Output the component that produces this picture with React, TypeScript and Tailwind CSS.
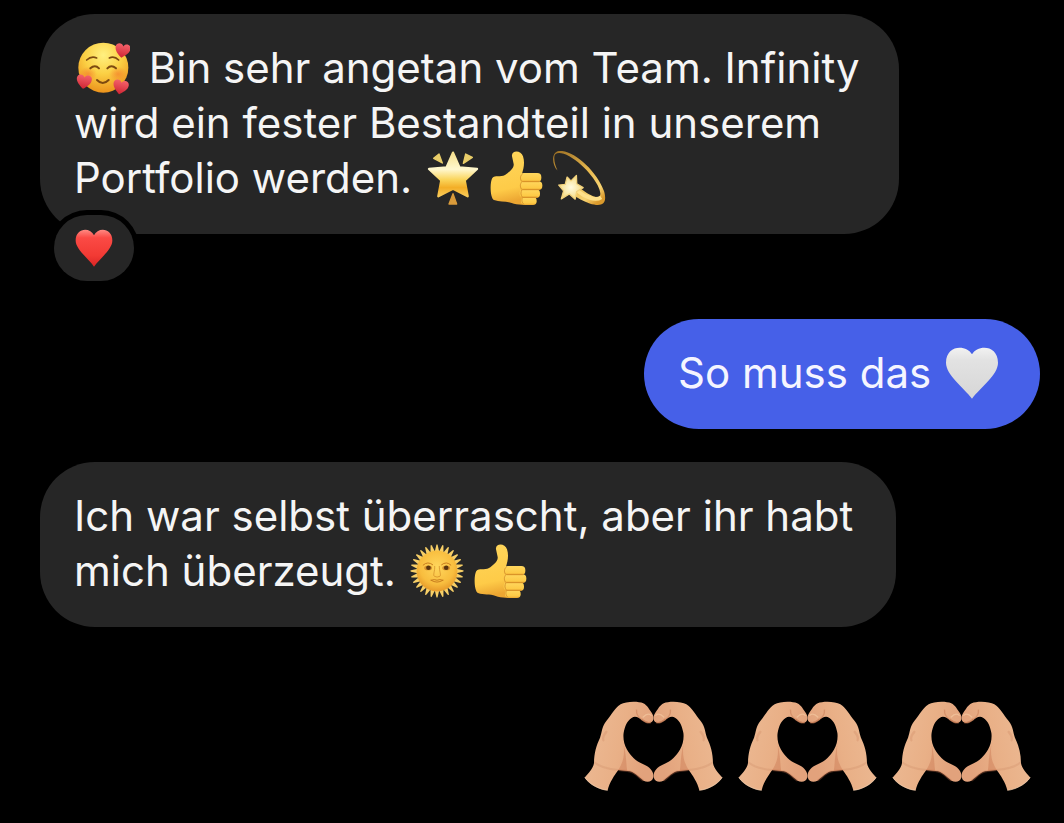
import React, { useId } from "react";
import { cva } from "class-variance-authority";
import { clsx } from "clsx";

type EmojiProps = {
  label: string;
  viewBox: string;
  className?: string;
  children: React.ReactNode;
};

function Emoji({ label, viewBox, className, children }: EmojiProps) {
  return (
    <svg
      role="img"
      aria-label={label}
      viewBox={viewBox}
      className={clsx(className ?? "inline-block w-[54px] h-[54px] ml-[2px] mr-[7px] align-[-12px]")}
    >
      {children}
    </svg>
  );
}

function LoveFace() {
  const id = useId();
  const heart = "M0 21C-9 14-21 5-21-7C-21-19-5-22 0-11C5-22 21-19 21-7C21 5 9 14 0 21Z";
  return (
    <Emoji label="Lächelndes Gesicht mit Herzen" viewBox="48 33 162 162">
      <defs>
        <radialGradient id={id + "f"} cx="0.5" cy="0.25" r="0.75">
          <stop offset="0" stopColor="#fff080" />
          <stop offset="0.5" stopColor="#fbd044" />
          <stop offset="1" stopColor="#ec931c" />
        </radialGradient>
        <radialGradient id={id + "c"}>
          <stop offset="0" stopColor="#f5762b" stopOpacity="0.6" />
          <stop offset="1" stopColor="#f5762b" stopOpacity="0" />
        </radialGradient>
        <linearGradient id={id + "h"} x1="0" y1="0" x2="0" y2="1">
          <stop offset="0" stopColor="#f4626a" />
          <stop offset="1" stopColor="#cf2433" />
        </linearGradient>
      </defs>
      <circle cx="130" cy="113" r="75" fill={`url(#${id}f)`} />
      <ellipse cx="84" cy="132" rx="27" ry="22" fill={`url(#${id}c)`} />
      <ellipse cx="174" cy="132" rx="27" ry="22" fill={`url(#${id}c)`} />
      <g fill="none" stroke="#7d4a10" strokeLinecap="round">
        <path d="M80 90Q94 77 110 84" strokeWidth="5" />
        <path d="M148 84Q163 77 176 90" strokeWidth="5" />
        <path d="M91 115Q105 102 117 115" strokeWidth="6" />
        <path d="M142 115Q154 102 168 115" strokeWidth="6" />
        <path d="M111 150Q128 168 146 150" strokeWidth="6" />
      </g>
      <g fill={`url(#${id}h)`}>
        <path d={heart} transform="translate(188 61) rotate(10) scale(1.08)" />
        <path d={heart} transform="translate(72 154) rotate(8) scale(1.08)" />
        <path d={heart} transform="translate(182 170) rotate(12) scale(1.1)" />
      </g>
    </Emoji>
  );
}

function GlowingStar() {
  const id = useId();
  return (
    <Emoji label="Funkelnder Stern" viewBox="33 31 162 162">
      <defs>
        <linearGradient id={id} x1="0" y1="0" x2="0" y2="1">
          <stop offset="0" stopColor="#f6e08c" />
          <stop offset="0.38" stopColor="#fff8cf" />
          <stop offset="0.62" stopColor="#fad45a" />
          <stop offset="0.8" stopColor="#f3ae27" />
          <stop offset="1" stopColor="#f9cb59" />
        </linearGradient>
      </defs>
      <path
        d="M114 36L133 80L186 85L149 119L158 167L114 144L70 167L79 119L42 85L95 80Z"
        fill={`url(#${id})`}
        stroke={`url(#${id})`}
        strokeWidth="7"
        strokeLinejoin="round"
      />
      <g strokeWidth="4" strokeLinejoin="round">
        <path d="M72 40L82 67L56 53Z" fill="#e9cd69" stroke="#e9cd69" />
        <path d="M152 40L172 50L145 68Z" fill="#e9cd69" stroke="#e9cd69" />
        <path d="M114 159L125 190L102 190Z" fill="#d99b3b" stroke="#d99b3b" />
      </g>
    </Emoji>
  );
}

function ThumbsUp() {
  const id = useId();
  return (
    <Emoji label="Daumen hoch" viewBox="222 31 162 162">
      <defs>
        <linearGradient id={id} x1="0" y1="0" x2="0.15" y2="1">
          <stop offset="0" stopColor="#ffd75c" />
          <stop offset="0.75" stopColor="#fecb48" />
          <stop offset="1" stopColor="#eca632" />
        </linearGradient>
        <linearGradient id={id + "n"} x1="0" y1="0" x2="0" y2="1">
          <stop offset="0" stopColor="#ffd75e" />
          <stop offset="0.75" stopColor="#fdca46" />
          <stop offset="1" stopColor="#e9a530" />
        </linearGradient>
      </defs>
      <path
        d="M291 47C288 29 318 27 324 47C330 65 326 84 321 99L338 100L340 190C322 194 304 192 290 187C272 180 254 185 237 178C225 172 224 125 232 112C240 103 257 110 270 103C281 96 298 82 296 70Z"
        fill={`url(#${id})`}
      />
      <g fill={`url(#${id}n)`}>
        <rect x="318" y="169" width="47" height="24" rx="11" />
        <rect x="314" y="146" width="61" height="26" rx="12" />
        <rect x="315" y="122" width="67" height="26" rx="12" />
        <rect x="315" y="97" width="64" height="27" rx="12" />
      </g>
      <path
        d="M323 99C314 106 315 117 321 123C314 130 315 141 321 147C316 155 317 165 323 170C319 178 320 186 328 192"
        fill="none"
        stroke="#d9972f"
        strokeWidth="3"
      />
      <path d="M322 123H373M322 147H374M323 170H366" stroke="#d79027" strokeWidth="3" />
    </Emoji>
  );
}

function Dizzy() {
  const id = useId();
  return (
    <Emoji label="Schwindlig" viewBox="411 28 164 168">
      <defs>
        <linearGradient id={id} x1="0" y1="0" x2="0.8" y2="1">
          <stop offset="0" stopColor="#9a6d22" />
          <stop offset="0.55" stopColor="#e8b94e" />
          <stop offset="0.85" stopColor="#f7d372" />
          <stop offset="1" stopColor="#d9992c" />
        </linearGradient>
        <radialGradient id={id + "s"}>
          <stop offset="0" stopColor="#fffbe0" />
          <stop offset="1" stopColor="#f5dc85" />
        </radialGradient>
      </defs>
      <path
        d="M426 89C408 69 406 31 431 28C475 23 549 91 571 153C583 195 562 202 526 191C505 184 489 174 475 164L498 145C517 159 543 177 555 170C575 157 524 79 463 44C437 31 416 30 416 49C416 65 421 76 426 89Z"
        fill={`url(#${id})`}
      />
      <path d="M488 152C512 172 544 184 562 172" stroke="#ffe18a" strokeWidth="12" fill="none" />
      <path
        d="M456 109L468 121L485 104L486 130L506 142L486 154L481 178L463 162L438 177L445 152L430 134L450 132Z"
        fill={`url(#${id}s)`}
        stroke="#f2d27c"
        strokeWidth="4"
        strokeLinejoin="round"
      />
    </Emoji>
  );
}

const RAYS = Array.from({ length: 28 }, (_, i) => (i * 360) / 28);

function SunFace() {
  const id = useId();
  return (
    <Emoji label="Sonne mit Gesicht" viewBox="34 24 164 164">
      <defs>
        <radialGradient id={id} cx="0.5" cy="0.4" r="0.6">
          <stop offset="0" stopColor="#ffd65c" />
          <stop offset="0.7" stopColor="#f8bd3e" />
          <stop offset="1" stopColor="#e79a2a" />
        </radialGradient>
      </defs>
      {RAYS.map((angle) => (
        <path
          key={angle}
          d="M109 48L114 27Q116 23 118 27L123 48Z"
          fill="#f7cf66"
          transform={`rotate(${angle} 116 106)`}
        />
      ))}
      <circle cx="116" cy="106" r="62" fill={`url(#${id})`} />
      <g fill="none" stroke="#c77c1d" strokeWidth="3" strokeLinecap="round">
        <path d="M74 88Q88 75 103 87" />
        <path d="M130 87Q145 75 158 88" />
        <path d="M109 92C110 107 103 118 108 122Q116 127 125 122C129 118 123 107 123 92" opacity="0.6" />
        <path d="M98 134Q116 146 134 134" />
        <path d="M98 134Q109 130 116 134Q124 130 134 134" />
      </g>
      <ellipse cx="89" cy="97" rx="12" ry="7" fill="#d6922f" />
      <ellipse cx="144" cy="97" rx="12" ry="7" fill="#d6922f" />
      <circle cx="90" cy="96" r="7" fill="#59340f" />
      <circle cx="144" cy="96" r="7" fill="#59340f" />
    </Emoji>
  );
}

function WhiteHeart() {
  const id = useId();
  return (
    <Emoji label="Weißes Herz" viewBox="915 93 162 162">
      <defs>
        <linearGradient id={id} x1="0" y1="0" x2="0" y2="1">
          <stop offset="0" stopColor="#f2f2f2" />
          <stop offset="0.25" stopColor="#e2e2e2" />
          <stop offset="1" stopColor="#d6d6d6" />
        </linearGradient>
      </defs>
      <path
        d="M996 118C1012 88 1074 88 1074 143C1074 180 1022 216 996 251C970 216 918 180 918 143C918 88 980 88 996 118Z"
        fill={`url(#${id})`}
      />
    </Emoji>
  );
}

function RedHeart() {
  const id = useId();
  return (
    <Emoji label="Rotes Herz" viewBox="117 87 116 116" className="block w-[38px] h-[38px]">
      <defs>
        <linearGradient id={id} x1="0" y1="0" x2="0" y2="1">
          <stop offset="0" stopColor="#ff8a83" />
          <stop offset="0.22" stopColor="#fb4a45" />
          <stop offset="0.7" stopColor="#f23a34" />
          <stop offset="1" stopColor="#d92525" />
        </linearGradient>
      </defs>
      <path
        d="M175 106C187 80 231 83 231 122C231 149 193 177 175 202C158 177 119 149 119 122C119 83 163 80 175 106Z"
        fill={`url(#${id})`}
      />
    </Emoji>
  );
}

function HeartHands() {
  const id = useId();
  const hand = (
    <>
      <path
        d="M32 262C46 246 57 236 60 218C60 190 67 166 78 143C84 124 84 108 97 92C114 73 119 56 140 42C155 33 193 32 208 39C221 45 226 58 234 68C241 78 241 92 231 97C221 102 211 94 203 89C195 83 185 75 173 83C159 93 153 107 149 128C147 143 150 163 159 178C172 200 187 214 210 223C229 231 242 246 238 263C235 276 220 278 209 272C192 260 182 244 160 243L133 240C122 255 106 278 101 301C78 299 46 284 32 262Z"
        fill={`url(#${id})`}
      />
      <path
        d="M149 163C153 195 147 218 133 240L160 243C156 220 158 195 149 163Z"
        fill="#c9744d"
        opacity="0.4"
      />
      <path d="M133 240L160 243C182 244 192 260 209 272" fill="none" stroke="#c9744d" strokeWidth="6" opacity="0.35" />
      <path d="M188 58C187 70 190 79 203 87" fill="none" stroke="#bd6f49" strokeWidth="4" opacity="0.4" />
      <path d="M203 87C212 94 222 101 231 96" fill="none" stroke="#bd6f49" strokeWidth="5" opacity="0.6" />
      <path d="M208 80C218 70 226 70 232 75" fill="none" stroke="#f3c7a0" strokeWidth="4" strokeLinecap="round" opacity="0.7" />
      <path d="M62 217C78 232 104 237 133 240" fill="none" stroke="#c98360" strokeWidth="6" opacity="0.25" />
      <path d="M97 125Q84 140 88 150" fill="none" stroke="#c77c59" strokeWidth="7" opacity="0.25" strokeLinecap="round" />
      <path d="M32 262C46 284 78 299 101 301" fill="none" stroke="#f7d3b2" strokeWidth="3" opacity="0.7" />
    </>
  );
  return (
    <Emoji label="Herzhände" viewBox="30 32 418 271" className="block w-[139px] h-[90px]">
      <defs>
        <linearGradient id={id} x1="0" y1="0" x2="1" y2="0.3">
          <stop offset="0" stopColor="#d3926d" />
          <stop offset="0.28" stopColor="#ebb68f" />
          <stop offset="0.6" stopColor="#e9b087" />
          <stop offset="1" stopColor="#e2a27c" />
        </linearGradient>
      </defs>
      <g>{hand}</g>
      <g transform="translate(478 0) scale(-1 1)">{hand}</g>
    </Emoji>
  );
}

const bubble = cva(
  "w-fit rounded-[55px] px-[34px] pt-[26px] pb-[29px] text-[42px] leading-[55px]",
  {
    variants: {
      side: {
        received: "self-start bg-[#262626] text-[#f5f5f5]",
        sent: "self-end bg-[#4660e8] text-[#f5f5ff]",
      },
    },
  }
);

export default function App() {
  return (
    <main
      lang="de"
      className="flex flex-col min-h-screen bg-black pt-[14px] pb-8 pl-10 pr-6 font-['Inter','Liberation_Sans',sans-serif]"
    >
      <div className="relative self-start">
        <p className={clsx(bubble({ side: "received" }), "max-w-[859px]")}>
          <LoveFace /> Bin sehr angetan vom Team. Infinity wird ein fester Bestandteil in unserem
          Portfolio werden. <GlowingStar /><ThumbsUp /><Dizzy />
        </p>
        {/* Reaction */}
        <button
          type="button"
          aria-label="Reaktion: Rotes Herz"
          className="absolute left-[14px] -bottom-[47px] flex items-center justify-center w-20 h-[66px] rounded-full bg-[#262626] ring-[5px] ring-black"
        >
          <RedHeart />
        </button>
      </div>

      <p className={clsx(bubble({ side: "sent" }), "mt-[85px]")}>
        So muss das <WhiteHeart />
      </p>

      <p className={clsx(bubble({ side: "received" }), "mt-[33px] max-w-[856px]")}>
        Ich war selbst überrascht, aber ihr habt mich überzeugt. <SunFace /><ThumbsUp />
      </p>

      <div className="flex self-end gap-[15px] mt-[74px] mr-[9px]">
        <HeartHands />
        <HeartHands />
        <HeartHands />
      </div>
    </main>
  );
}
